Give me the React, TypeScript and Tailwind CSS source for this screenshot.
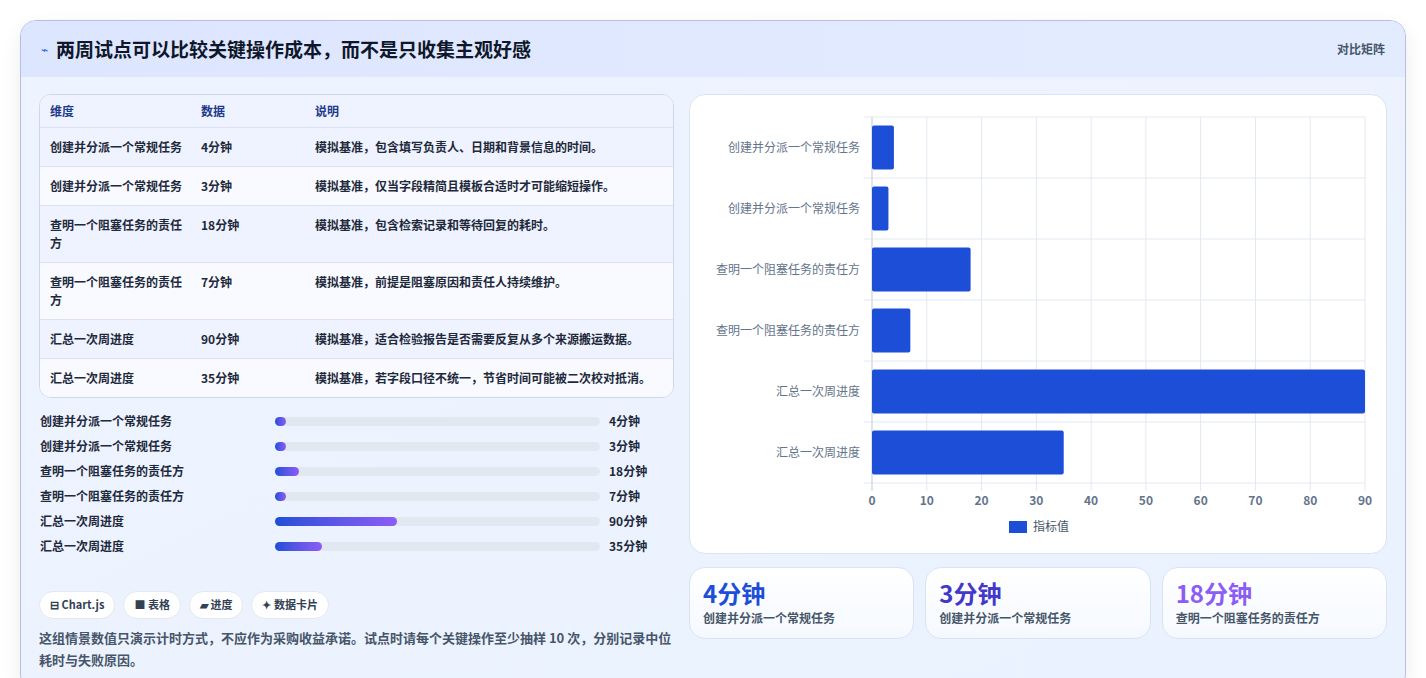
import React from "react";

const ROWS = [
  { name: "创建并分派一个常规任务", v: 4, note: "模拟基准，包含填写负责人、日期和背景信息的时间。" },
  { name: "创建并分派一个常规任务", v: 3, note: "模拟基准，仅当字段精简且模板合适时才可能缩短操作。" },
  { name: "查明一个阻塞任务的责任方", v: 18, note: "模拟基准，包含检索记录和等待回复的耗时。" },
  { name: "查明一个阻塞任务的责任方", v: 7, note: "模拟基准，前提是阻塞原因和责任人持续维护。" },
  { name: "汇总一次周进度", v: 90, note: "模拟基准，适合检验报告是否需要反复从多个来源搬运数据。" },
  { name: "汇总一次周进度", v: 35, note: "模拟基准，若字段口径不统一，节省时间可能被二次校对抵消。" },
];

const FONT = { fontFamily: '"Noto Sans CJK SC", "Noto Sans", sans-serif' };

function Chart() {
  const left = 182, right = 675, top = 22, rowH = 61;
  const sx = (right - left) / 90;
  return (
    <svg width="698" height="460" className="block">
      {Array.from({ length: 10 }).map((_, i) => (
        <line key={i} x1={left + i * 10 * sx} x2={left + i * 10 * sx} y1={top} y2={top + rowH * 6 + 8} stroke="#e2e8f0" />
      ))}
      {Array.from({ length: 7 }).map((_, i) => (
        <line key={i} x1={left - 8} x2={right} y1={top + i * rowH} y2={top + i * rowH} stroke="#e2e8f0" />
      ))}
      <line x1={left} x2={left} y1={top} y2={top + rowH * 6 + 8} stroke="#cbd5e1" />
      {ROWS.map((r, i) => {
        const cy = top + i * rowH + rowH / 2;
        return (
          <g key={i}>
            <text x={left - 12} y={cy + 4} textAnchor="end" fontSize="12" fill="#64748b" style={FONT}>{r.name}</text>
            <rect x={left} y={cy - 22} width={r.v * sx} height={44} fill="#1d4ed8" rx="2" />
          </g>
        );
      })}
      {Array.from({ length: 10 }).map((_, i) => (
        <text key={i} x={left + i * 10 * sx} y={410} textAnchor="middle" fontSize="12" fontWeight="600" fill="#64748b" style={FONT}>{i * 10}</text>
      ))}
      <rect x={319} y={426} width={18} height={12} fill="#1d4ed8" />
      <text x={343} y={436} fontSize="12" fill="#475569" style={FONT}>指标值</text>
    </svg>
  );
}

export default function App() {
  return (
    <div className="min-h-screen bg-white p-5" style={FONT}>
      <div className="rounded-2xl border border-[#b4bfe8] bg-gradient-to-br from-[#eef4ff] to-[#eaf2ff] shadow-[0_8px_20px_rgba(15,23,42,0.08)] overflow-hidden">
        <div className="h-[56px] flex items-center justify-between px-5 bg-gradient-to-r from-[#dde6ff] to-[#e3ecff]">
          <div className="flex items-center gap-2">
            <span className="text-[#2563eb] text-xs">⌁</span>
            <h1 className="text-[19px] font-bold text-[#0f172a]">两周试点可以比较关键操作成本，而不是只收集主观好感</h1>
          </div>
          <span className="text-xs text-[#475569] font-semibold">对比矩阵</span>
        </div>
        <div className="flex gap-[15px] px-[18px] pt-[17px] pb-[19px]">
          <div className="w-[635px] flex flex-col">
            <div className="rounded-xl border border-[#cdd7ee] overflow-hidden bg-white">
              <table className="w-full text-xs text-[#1e293b] font-semibold border-collapse">
                <thead>
                  <tr className="h-8 bg-[#eef3ff] text-[#1e3a8a] text-left">
                    <th className="pl-[10px] w-[161px] font-semibold">维度</th>
                    <th className="w-[114px] font-semibold">数据</th>
                    <th className="font-semibold">说明</th>
                  </tr>
                </thead>
                <tbody>
                  {ROWS.map((r, i) => (
                    <tr key={i} className={`border-t border-[#dbe3f2] ${i % 2 ? "bg-[#f8faff]" : "bg-[#eef3ff]"}`}>
                      <td className="pl-[10px] pr-2 py-[10px] align-top leading-[18px]">{r.name}</td>
                      <td className="py-[10px] align-top leading-[18px]">{r.v}分钟</td>
                      <td className="py-[10px] pr-2 align-top leading-[18px]">{r.note}</td>
                    </tr>
                  ))}
                </tbody>
              </table>
            </div>
            <div className="mt-[11px] flex flex-col">
              {ROWS.map((r, i) => (
                <div key={i} className="h-[25px] flex items-center text-xs font-semibold text-[#1e293b]">
                  <span className="w-[236px] pl-px">{r.name}</span>
                  <div className="w-[325px] h-[9px] rounded-full bg-[#e2e8f0]">
                    <div className="h-full rounded-full bg-gradient-to-r from-[#1d4ed8] to-[#8b5cf6] min-w-[11px]" style={{ width: `${(r.v / 240) * 100}%` }} />
                  </div>
                  <span className="ml-[9px]">{r.v}分钟</span>
                </div>
              ))}
            </div>
            <div className="mt-[32px] flex gap-2 text-[11px] font-semibold text-[#334155]">
              <span className="h-7 px-2.5 flex items-center rounded-full bg-white border border-[#e2e8f0]">⊟ Chart.js</span>
              <span className="h-7 px-2.5 flex items-center rounded-full bg-white border border-[#e2e8f0]">■ 表格</span>
              <span className="h-7 px-2.5 flex items-center rounded-full bg-white border border-[#e2e8f0]">▰ 进度</span>
              <span className="h-7 px-2.5 flex items-center rounded-full bg-white border border-[#e2e8f0]">✦ 数据卡片</span>
            </div>
            <p className="mt-[8px] text-[13px] leading-[22px] text-[#475569] font-semibold">
              这组情景数值只演示计时方式，不应作为采购收益承诺。试点时请每个关键操作至少抽样 10 次，分别记录中位耗时与失败原因。
            </p>
          </div>
          <div className="w-[698px] flex flex-col gap-[13px]">
            <div className="rounded-2xl bg-white border border-[#dbe3f2] h-[460px] overflow-hidden">
              <Chart />
            </div>
            <div className="grid grid-cols-3 gap-[11px]">
              {[
                { v: "4分钟", l: "创建并分派一个常规任务", c: "text-[#1d4ed8]" },
                { v: "3分钟", l: "创建并分派一个常规任务", c: "text-[#4338ca]" },
                { v: "18分钟", l: "查明一个阻塞任务的责任方", c: "text-[#8b5cf6]" },
              ].map((s, i) => (
                <div key={i} className="h-[72px] rounded-2xl bg-gradient-to-b from-white to-[#f5f9ff] border border-[#dbe3f2] px-[13px] pt-[10px]">
                  <div className={`text-[24px] leading-[30px] font-bold ${s.c}`}>{s.v}</div>
                  <div className="text-xs text-[#475569] font-semibold mt-[2px]">{s.l}</div>
                </div>
              ))}
            </div>
          </div>
        </div>
      </div>
    </div>
  );
}
